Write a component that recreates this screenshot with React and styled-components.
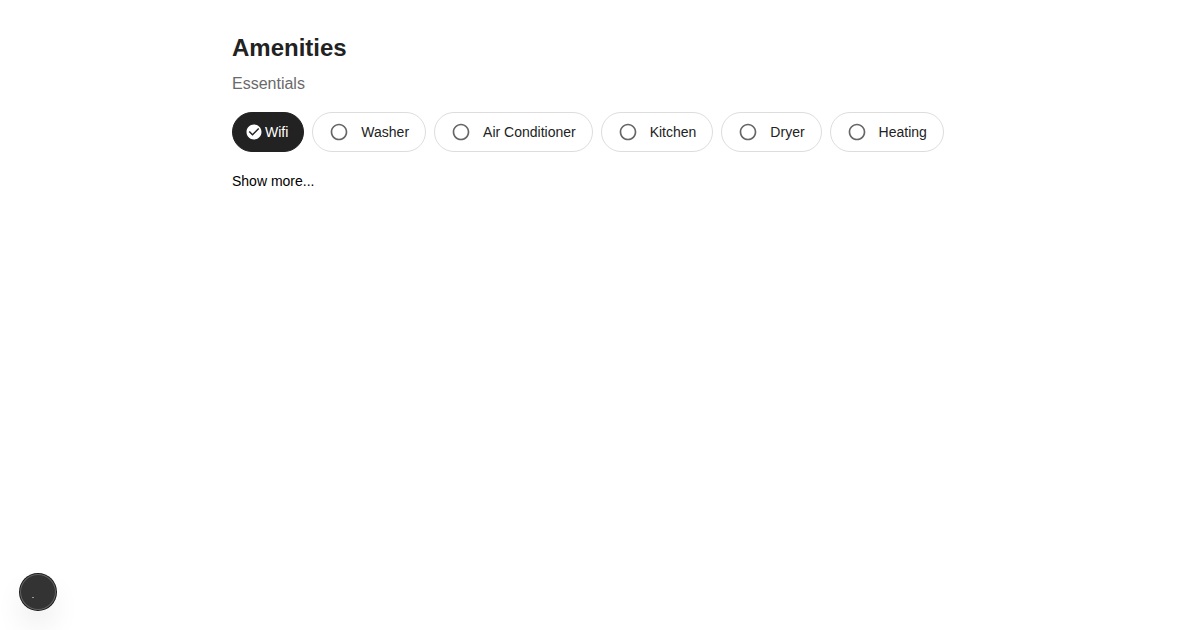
import React, { useState } from "react";
import styled, { createGlobalStyle } from "styled-components";

const GlobalStyle = createGlobalStyle`
  * { box-sizing: border-box; }
  body {
    margin: 0;
    background: #fff;
    color: #222;
    font-family: "Liberation Sans", Arial, sans-serif;
  }
`;

const Page = styled.main`
  max-width: 768px;
  margin: 0 auto;
  padding: 32px 16px;
`;

const Title = styled.h1`
  margin: 0;
  font-size: 24px;
  line-height: 32px;
  font-weight: 700;
`;

const Group = styled.fieldset`
  margin: 8px 0 0;
  padding: 0;
  border: 0;
  min-width: 0;
`;

const GroupTitle = styled.legend`
  padding: 0;
  font-size: 16px;
  line-height: 24px;
  color: #6a6a6a;
`;

const ChipList = styled.div`
  display: flex;
  flex-wrap: wrap;
  gap: 8px;
  margin-top: 16px;
`;

const Chip = styled.label`
  display: inline-flex;
  align-items: center;
  gap: ${(p) => (p.$selected ? 2 : 12)}px;
  height: 40px;
  padding: 0 ${(p) => (p.$selected ? 15 : 16)}px 0 ${(p) => (p.$selected ? 12 : 16)}px;
  border: 1px solid ${(p) => (p.$selected ? "#222" : "#ddd")};
  border-radius: 20px;
  background: ${(p) => (p.$selected ? "#222" : "#fff")};
  color: ${(p) => (p.$selected ? "#fff" : "#222")};
  font-size: 14px;
  line-height: 20px;
  cursor: pointer;
`;

const Checkbox = styled.input`
  appearance: none;
  position: absolute;
  width: 1px;
  height: 1px;
  margin: 0;
  opacity: 0;
`;

const Icon = styled.svg`
  flex: none;
  width: ${(p) => p.$size}px;
  height: ${(p) => p.$size}px;
  fill: ${(p) => p.$color};
`;

const ShowMore = styled.button`
  display: block;
  margin: 20px 0 0;
  padding: 0;
  border: 0;
  background: none;
  color: #000;
  font: 14px/18px "Liberation Sans", Arial, sans-serif;
  cursor: pointer;
`;

const FloatingButton = styled.button`
  position: fixed;
  left: 20px;
  bottom: 20px;
  width: 36px;
  height: 36px;
  padding: 0;
  border: 0;
  border-radius: 50%;
  background: #333;
  box-shadow: 0 0 0 1px #171717, inset 0 0 0 1px rgba(255, 255, 255, 0.24),
    0 16px 32px -8px rgba(0, 0, 0, 0.24);
  cursor: pointer;
`;

const CHECK =
  "M12 2C6.48 2 2 6.48 2 12s4.48 10 10 10 10-4.48 10-10S17.52 2 12 2zm-2 15l-5-5 1.41-1.41L10 14.17l7.59-7.59L19 8l-9 9z";
const RING =
  "M12 2C6.48 2 2 6.48 2 12s4.48 10 10 10 10-4.48 10-10S17.52 2 12 2zm0 18c-4.42 0-8-3.58-8-8s3.58-8 8-8 8 3.58 8 8-3.58 8-8 8z";

const AMENITIES = ["Wifi", "Washer", "Air Conditioner", "Kitchen", "Dryer", "Heating"];

export default function App() {
  const [selected, setSelected] = useState(["Wifi"]);
  const toggle = (name) =>
    setSelected((list) =>
      list.includes(name) ? list.filter((n) => n !== name) : [...list, name]
    );

  return (
    <>
      <GlobalStyle />
      <Page>
        <Title>Amenities</Title>
        <Group>
          <GroupTitle>Essentials</GroupTitle>
          <ChipList>
            {AMENITIES.map((name) => {
              const on = selected.includes(name);
              return (
                <Chip key={name} $selected={on}>
                  <Checkbox type="checkbox" checked={on} onChange={() => toggle(name)} />
                  <Icon viewBox="0 0 24 24" aria-hidden="true" $size={on ? 18 : 20} $color={on ? "#fff" : "#666"}>
                    <path d={on ? CHECK : RING} />
                  </Icon>
                  {name}
                </Chip>
              );
            })}
          </ChipList>
        </Group>
        <ShowMore type="button">Show more...</ShowMore>
      </Page>
      <FloatingButton type="button" aria-label="Open tools">
        <Icon viewBox="0 0 36 36" aria-hidden="true" $size={36} $color="#999">
          <path d="M12 23h2v1h-2z" />
        </Icon>
      </FloatingButton>
    </>
  );
}
